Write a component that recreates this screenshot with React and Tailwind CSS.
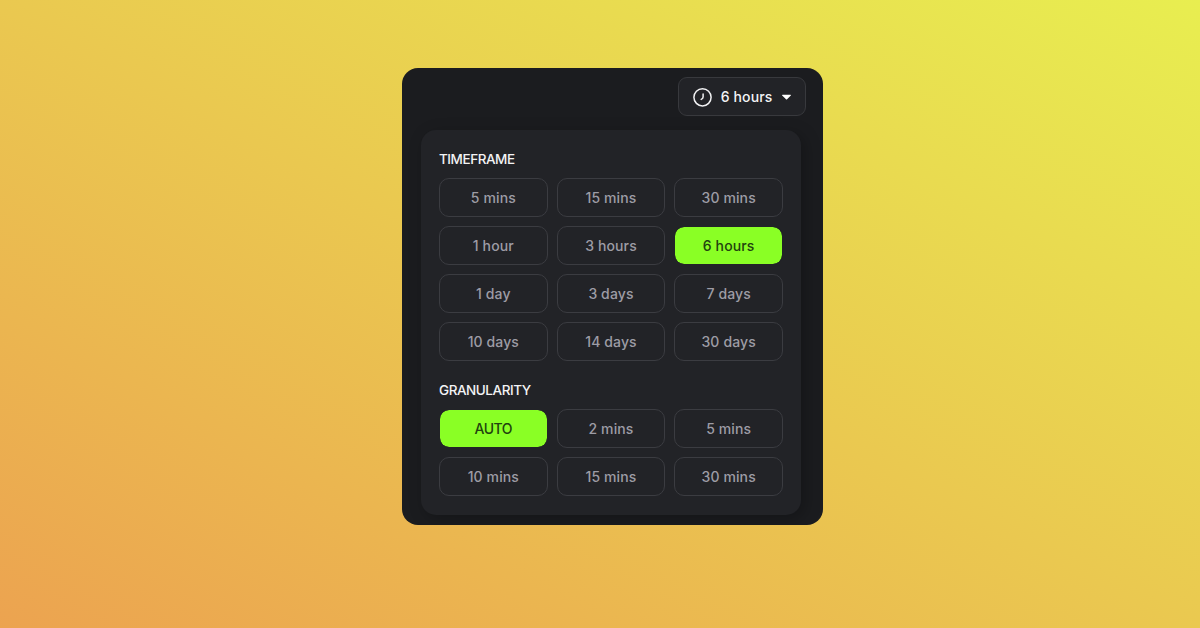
const timeframes = [
  '5 mins', '15 mins', '30 mins',
  '1 hour', '3 hours', '6 hours',
  '1 day', '3 days', '7 days',
  '10 days', '14 days', '30 days',
];
const granularities = ['AUTO', '2 mins', '5 mins', '10 mins', '15 mins', '30 mins'];

function Option({ label, selected }) {
  return (
    <button
      className={
        'flex h-[39px] items-center justify-center rounded-[10px] border pt-px text-[14px] font-medium leading-none ' +
        (label === 'AUTO' ? 'tracking-[-0.5px] ' : 'tracking-[0.12px] ') +
        (selected
          ? 'border-[#222327] bg-[#8aff25] bg-clip-padding text-[#22420f]'
          : 'border-[#3b3c41] text-[#9d9ca5]')
      }
    >
      {label}
    </button>
  );
}

function Section({ title, options, selected }) {
  return (
    <section>
      <h2 className="h-[21px] pt-px text-[13.5px] leading-[21px] font-medium tracking-[-0.45px] text-[#f3f3f5]">{title}</h2>
      <div className="mt-[9px] grid grid-cols-3 gap-[9px]">
        {options.map((label) => (
          <Option key={label} label={label} selected={label === selected} />
        ))}
      </div>
    </section>
  );
}

function ClockIcon() {
  return (
    <svg className="size-5" viewBox="0 0 20 20" fill="none" stroke="#f1f1f3" strokeWidth="1.5" strokeLinecap="round">
      <circle cx="9.5" cy="10.3" r="8.6" />
      <path d="M10.1 7.1v2.9c0 1-.5 1.7-1.9 2.4" strokeLinejoin="round" />
    </svg>
  );
}

export default function App() {
  return (
    <main className="flex h-[628px] w-[1200px] items-start justify-center bg-[linear-gradient(to_top_right,#eca350,#e8ee50)] pt-[68px] pl-[25px] font-['Inter',sans-serif]">
      <div className="flex h-[457px] w-[421px] flex-col overflow-hidden rounded-[16px] bg-[#1b1c1f] pt-[9.4px] pl-[19px]">
        <button className="mr-[17px] flex h-[39px] w-[128px] items-center self-end rounded-[9px] border border-[#38393d] bg-[#222327] pl-[14px] text-[14px] leading-none font-medium text-[#f3f3f5]">
          <ClockIcon />
          <span className="ml-[7.6px] w-[52px] tracking-[0.12px] whitespace-nowrap">6 hours</span>
          <svg className="ml-[8.4px] h-[6px] w-[10px]" viewBox="0 0 10 6" fill="#ffffff">
            <path d="M1.500 .8h8c.5 0 .6.5.3.8L6.100 5.200c-.3.3-.8.3-1.100 0L1.200 1.600C.8 1.300 1 .8 1.500 .8Z" />
          </svg>
        </button>
        <div className="mt-[13.6px] flex h-[385px] w-[380px] flex-col gap-[18px] rounded-[15px] bg-[#222327] px-[18px] pt-[18px] shadow-[4px_4px_16px_rgba(0,0,0,0.25)]">
          <Section title="TIMEFRAME" options={timeframes} selected="6 hours" />
          <Section title="GRANULARITY" options={granularities} selected="AUTO" />
        </div>
      </div>
    </main>
  );
}
